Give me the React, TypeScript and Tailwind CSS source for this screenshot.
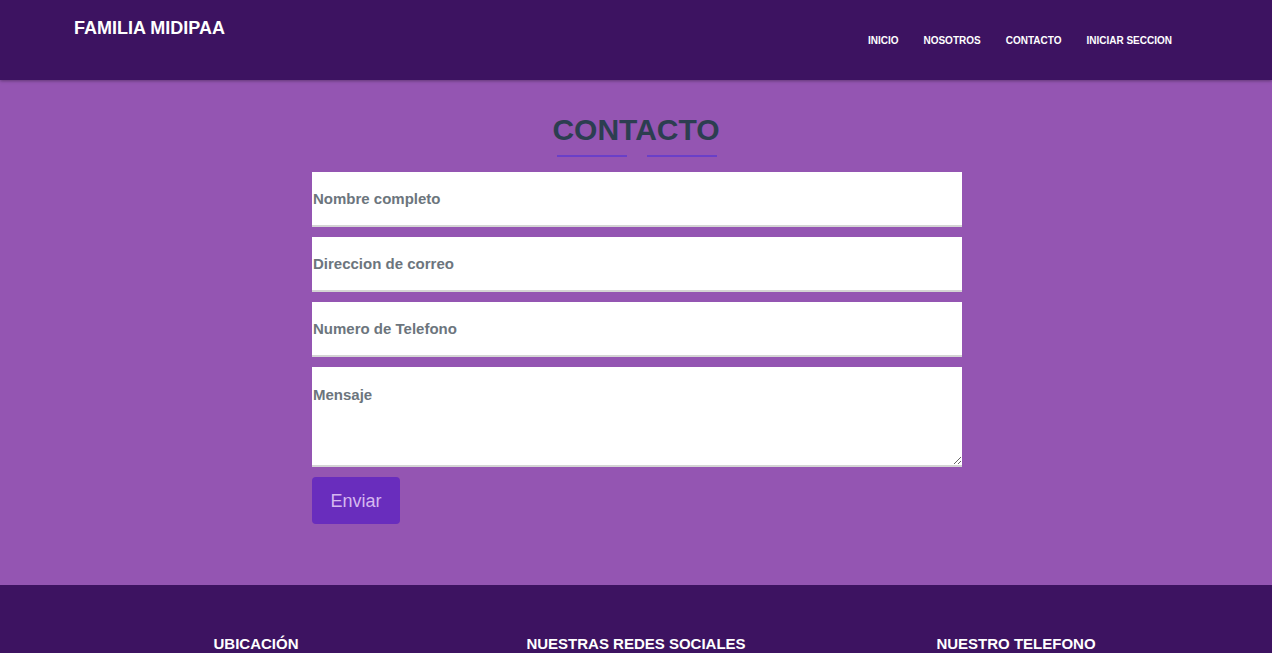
const fields = ["Nombre completo", "Direccion de correo", "Numero de Telefono"];

const links = ["INICIO", "NOSOTROS", "CONTACTO", "INICIAR SECCION"];

export default function App() {
  return (
    <div className="min-h-screen bg-[#9455b2] font-['Liberation_Sans',Arial,sans-serif]">
      <header className="h-20 bg-[#3d1361] shadow-[0_1px_3px_rgba(0,0,0,0.35)] relative">
        <div className="flex justify-between pl-[74px] pr-[100px]">
          <a className="text-white text-lg font-bold mt-[14px]">FAMILIA MIDIPAA</a>
          <nav className="flex gap-[25px] mt-[33px]">
            {links.map((l) => (
              <a key={l} className="text-white text-[10px] font-bold">{l}</a>
            ))}
          </nav>
        </div>
      </header>

      <section className="pt-[32px] pb-[61px]">
        <h2 className="text-center text-[30px] font-bold text-[#2c3e50] leading-9">CONTACTO</h2>
        <div className="flex justify-center gap-5 mt-[7px] pl-[2px]">
          <span className="block w-[70px] h-[2px] bg-[#6a3fc8]" />
          <span className="block w-[70px] h-[2px] bg-[#6a3fc8]" />
        </div>
        <form className="w-[650px] ml-[calc(50%-324px)] mt-[15px] flex flex-col gap-[10px]">
          {fields.map((f) => (
            <input
              key={f}
              placeholder={f}
              className="h-[55px] bg-white px-px border-b-2 border-[#d4d4d4] text-[15px] font-bold outline-none placeholder:text-[#6c757d]"
            />
          ))}
          <textarea
            placeholder="Mensaje"
            className="h-[100px] bg-white px-px pt-[17px] border-b-2 border-[#d4d4d4] text-[15px] font-bold outline-none placeholder:text-[#6c757d]"
          />
          <div>
            <button type="button" className="h-[47px] w-[88px] rounded bg-[#692dbd] text-[#d6b8f0] text-lg">Enviar</button>
          </div>
        </form>
      </section>

      <footer className="bg-[#3d1361] pt-[48px] pb-10">
        <div className="w-[1140px] mx-auto grid grid-cols-3 text-center">
          <h3 className="text-white text-[15px] font-bold">UBICACIÓN</h3>
          <h3 className="text-white text-[15px] font-bold">NUESTRAS REDES SOCIALES</h3>
          <h3 className="text-white text-[15px] font-bold">NUESTRO TELEFONO</h3>
        </div>
      </footer>
    </div>
  );
}
